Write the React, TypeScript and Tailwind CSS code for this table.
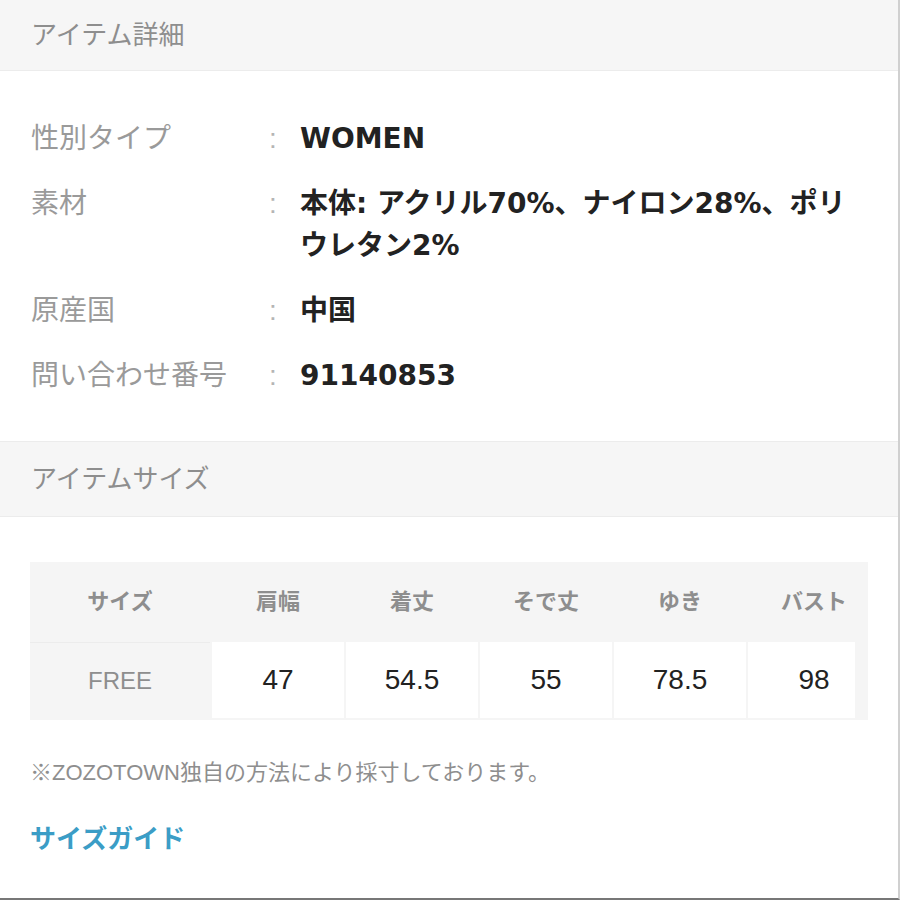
const FONT = {
  fontFamily: '"Liberation Sans", "Noto Sans CJK JP", sans-serif',
};

// 値の欧文は幅の広いフォントで（参照画像の字幅に合わせる）
const VALUE_FONT = {
  fontFamily: '"DejaVu Sans", "Noto Sans CJK JP", sans-serif',
};

const details: { label: string; value: string }[] = [
  { label: "性別タイプ", value: "WOMEN" },
  { label: "素材", value: "本体: アクリル70%、ナイロン28%、ポリウレタン2%" },
  { label: "原産国", value: "中国" },
  { label: "問い合わせ番号", value: "91140853" },
];

const sizeHeaders = ["肩幅", "着丈", "そで丈", "ゆき"];
const sizeValues = ["47", "54.5", "55", "78.5"];

function SectionHeader({ title, className = "" }: { title: string; className?: string }) {
  return (
    <div
      className={`bg-[#f6f6f6] border-y border-[#ececec] px-[31px] flex items-center text-[26px] text-[#8e8e8e] ${className}`}
    >
      {title}
    </div>
  );
}

export default function App() {
  return (
    <div
      style={FONT}
      className="w-[900px] h-[900px] overflow-hidden bg-white border-r-2 border-r-[#d0d0d0] border-b-2 border-b-[#777]"
    >
      {/* アイテム詳細 */}
      <SectionHeader title="アイテム詳細" className="h-[71px] border-t-0" />

      <div className="pt-[47px] pb-[44px] pl-[31px] pr-[30px] flex flex-col gap-[23px]">
        {details.map((row) => (
          <div key={row.label} className="flex items-start text-[28px] leading-[42px]">
            <div className="w-[238px] shrink-0 text-[#9a9a9a]">{row.label}</div>
            <div className="w-[31px] shrink-0 text-[#b5b5b5]">:</div>
            <div style={VALUE_FONT} className="flex-1 font-bold text-[#222] break-all">
              {row.value}
            </div>
          </div>
        ))}
      </div>

      {/* アイテムサイズ */}
      <SectionHeader title="アイテムサイズ" className="h-[76px]" />

      <div className="px-[30px] pt-[45px]">
        <div className="w-[838px] bg-[#f5f5f5] pr-[12px] pb-[2px]">
          <div className="grid grid-cols-[180px_132px_132px_132px_132px_107px] gap-[2px]">
            <div className="h-[78px] flex items-center justify-center text-[22px] text-[#8e8e8e] font-bold">
              サイズ
            </div>
            {sizeHeaders.map((h) => (
              <div
                key={h}
                className="h-[78px] flex items-center justify-center text-[22px] text-[#8e8e8e] font-bold"
              >
                {h}
              </div>
            ))}
            <div className="h-[78px] flex items-center justify-center pl-[25px] text-[22px] text-[#8e8e8e] font-bold">
              バスト
            </div>

            <div className="h-[76px] flex items-center justify-center text-[24px] text-[#8e8e8e] border-t border-[#ececec]">
              FREE
            </div>
            {sizeValues.map((v) => (
              <div
                key={v}
                className="h-[76px] bg-white flex items-center justify-center text-[28px] text-[#222]"
              >
                {v}
              </div>
            ))}
            <div className="h-[76px] bg-white flex items-center justify-center pl-[25px] text-[28px] text-[#222]">
              98
            </div>
          </div>
        </div>

        <p className="mt-[38px] text-[22px] leading-[30px] text-[#8e8e8e]">
          ※ZOZOTOWN独自の方法により採寸しております。
        </p>

        <a href="#" className="block mt-[32px] text-[26px] font-bold text-[#3b9dc6]">
          サイズガイド
        </a>
      </div>
    </div>
  );
}
